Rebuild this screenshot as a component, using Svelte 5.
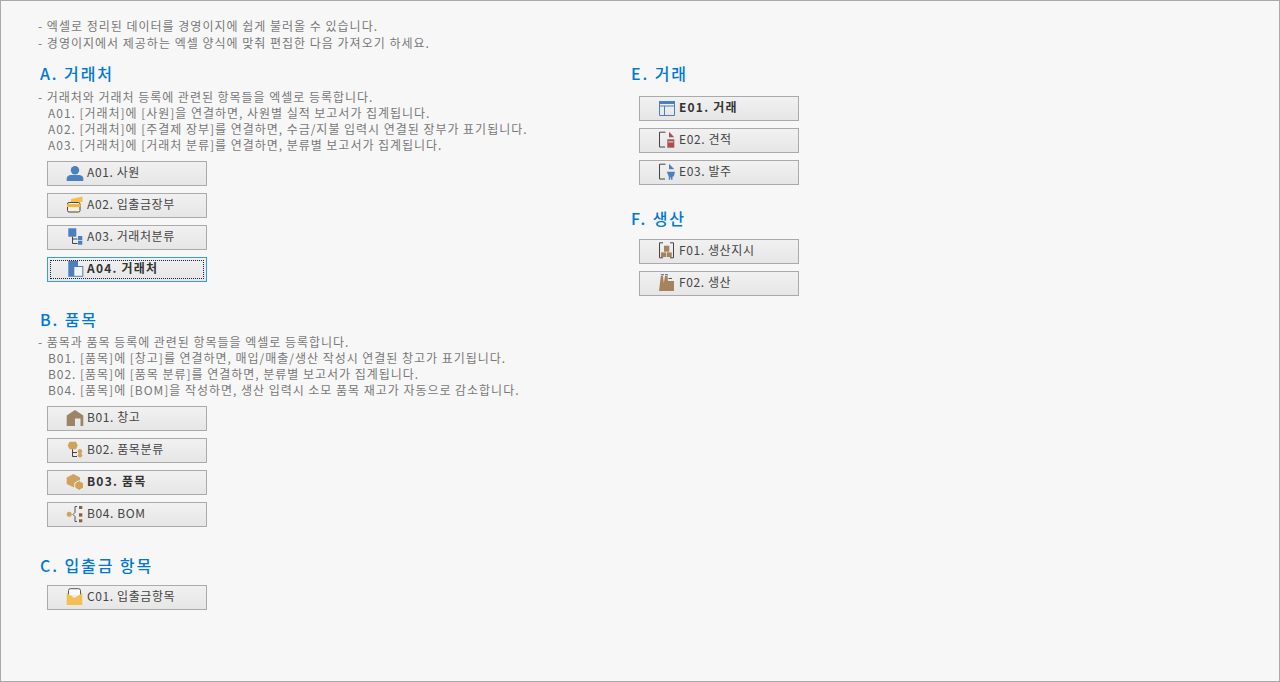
<script>
  const sections = {
    left: [
      {
        title: 'A. 거래처', cls: 'sa',
        lead: '- 거래처와 거래처 등록에 관련된 항목들을 엑셀로 등록합니다.',
        notes: ['A01. [거래처]에 [사원]을 연결하면, 사원별 실적 보고서가 집계됩니다.', 'A02. [거래처]에 [주결제 장부]를 연결하면, 수금/지불 입력시 연결된 장부가 표기됩니다.', 'A03. [거래처]에 [거래처 분류]를 연결하면, 분류별 보고서가 집계됩니다.'],
        buttons: [
          { icon: 'a01', label: 'A01. 사원' }, { icon: 'a02', label: 'A02. 입출금장부' },
          { icon: 'a03', label: 'A03. 거래처분류' }, { icon: 'a04', label: 'A04. 거래처', bold: true, focus: true }
        ]
      },
      {
        title: 'B. 품목', cls: 'sb',
        lead: '- 품목과 품목 등록에 관련된 항목들을 엑셀로 등록합니다.',
        notes: ['B01. [품목]에 [창고]를 연결하면, 매입/매출/생산 작성시 연결된 창고가 표기됩니다.', 'B02. [품목]에 [품목 분류]를 연결하면, 분류별 보고서가 집계됩니다.', 'B04. [품목]에 [BOM]을 작성하면, 생산 입력시 소모 품목 재고가 자동으로 감소합니다.'],
        buttons: [
          { icon: 'b01', label: 'B01. 창고' }, { icon: 'b02', label: 'B02. 품목분류' },
          { icon: 'b03', label: 'B03. 품목', bold: true }, { icon: 'b04', label: 'B04. BOM' }
        ]
      },
      { title: 'C. 입출금 항목', cls: 'sc', buttons: [{ icon: 'c01', label: 'C01. 입출금항목' }] }
    ],
    right: [
      {
        title: 'E. 거래', cls: 'se',
        buttons: [{ icon: 'e01', label: 'E01. 거래', bold: true }, { icon: 'e02', label: 'E02. 견적' }, { icon: 'e03', label: 'E03. 발주' }]
      },
      { title: 'F. 생산', cls: 'sf', buttons: [{ icon: 'f01', label: 'F01. 생산지시' }, { icon: 'f02', label: 'F02. 생산' }] }
    ]
  };
</script>

{#snippet icon(name)}
  <svg class="ico" viewBox="0 0 18 16" aria-hidden="true">
    {#if name === 'a01'}
      <circle cx="9" cy="4.2" r="4.2" fill="#4a80bd" />
      <path d="M.7 15V12.5Q.7 9.5 4.5 9H13.5Q17.3 9.5 17.3 12.5V15Z" fill="#4a80bd" />
    {:else if name === 'a02'}
      <path d="M5 4V1L16.5-1.5V4Z" fill="#f3c04f" />
      <rect x="1.5" y="4.5" width="12.5" height="9.5" rx="1.5" fill="#f7f0e0" stroke="#444" />
      <rect x="1" y="6" width="13.5" height="3" fill="#efb83a" />
    {:else if name === 'a03'}
      <rect x="2.3" y="-1.7" width="8" height="8.4" fill="#4a80bd" />
      <rect x="12" y="6" width="4.3" height="4" fill="#4a80bd" />
      <rect x="12" y="10.7" width="4.3" height="4" fill="#4a80bd" />
      <path d="M6.5 6.7V13.5H11.5M6.5 9H11.5" fill="none" stroke="#444" />
    {:else if name === 'a04'}
      <path d="M2.3-1.3H12V4H17.3V14.7H2.3Z" fill="#4a80bd" />
      <rect x="8.3" y="5" width="8" height="8.8" fill="#f4f4f4" />
    {:else if name === 'b01'}
      <path d="M.7 4.5L9-1L17.3 4.5V15H14.5V7.5H9V15H.7Z" fill="#9c8567" />
    {:else if name === 'b02'}
      <path d="M3.5-1.3H10L11.7 2.5L10 6.3H3.5L1.7 2.5Z" fill="#cfa25e" />
      <circle cx="14" cy="8.3" r="2.2" fill="#cfa25e" />
      <circle cx="14" cy="12.3" r="2.2" fill="#cfa25e" />
      <path d="M6.5 6.3V13.5H11M6.5 9.5H11" fill="none" stroke="#444" />
    {:else if name === 'b03'}
      <path d="M7.5-1L14 2.5V9L7.5 12.3L.7 9V2.5Z" fill="#cfa25e" />
      <path d="M13.2 5.6L17.6 8V13L13.2 15.4L8.8 13V8Z" fill="#cfa25e" stroke="#f0f0f0" />
    {:else if name === 'b04'}
      <circle cx="3.2" cy="7.2" r="2.5" fill="#cfa25e" />
      <path d="M11 -.5H9V5.5L7 7.5L9 9.5V14.5H11" fill="none" stroke="#555" />
      <rect x="13" y="-1" width="3.3" height="3" fill="#8b5e3c" />
      <rect x="13" y="6.3" width="3.3" height="3.3" fill="#8b5e3c" />
      <rect x="13" y="12.3" width="3.3" height="3" fill="#8b5e3c" />
    {:else if name === 'c01'}
      <path d="M2.5 5V.5Q2.5-1.3 4.5-1.3H12.5Q14.5-1.3 14.5.5V5" fill="#fafafa" stroke="#555" />
      <path d="M.7 3L8.5 8L16.3 3V15H.7Z" fill="#f2bf52" />
    {:else if name === 'e01'}
      <rect x="1" y="0" width="16" height="3" fill="#4a80bd" />
      <path d="M1.5 3V14.5H16.5V3M1.5 5H16.5M6.5 5V14.5" fill="none" stroke="#4a80bd" />
    {:else if name === 'e02'}
      <path d="M7.5-.8H1.5V14H7" fill="none" stroke="#444" />
      <path d="M11-1.3L16.3 4.3H11Z" fill="#a85050" />
      <rect x="9.3" y="6.3" width="7" height="8.4" fill="#a85050" />
      <rect x="10.3" y="8.4" width="5" height="1" fill="#f2e6e6" />
    {:else if name === 'e03'}
      <path d="M7.5-.8H1.5V14H7" fill="none" stroke="#444" />
      <path d="M11-1.3L16.3 4.3H11Z" fill="#4a80bd" />
      <path d="M8.7 6.7H17L15.8 11.5H14.5V14.7H13V12.5H12.2V14.7H10.8V11.5Z" fill="#4a80bd" />
    {:else if name === 'f01'}
      <path d="M5-1.2H1.5V13.8H5M12-1.2H15.5V13.8H12" fill="none" stroke="#444" />
      <rect x="6" y="1.7" width="5.3" height="6" fill="#a5835c" />
      <rect x="3" y="8.4" width="5" height="4.6" fill="#a5835c" />
      <rect x="8.7" y="8.4" width="5" height="4.6" fill="#a5835c" />
    {:else if name === 'f02'}
      <path d="M1 15L2.8 0H5L5.8 7L7 0H9.5L10 5H16V15Z" fill="#a5835c" />
      <path d="M2.8-1.2H6M7-1.2H10M10.5 2.5H14" fill="none" stroke="#555" />
    {/if}
  </svg>
{/snippet}

{#snippet group(s)}
  <section class={s.cls}>
    <h2>{s.title}</h2>
    {#if s.lead}
      <div class="desc">
        <p>{s.lead}</p>
        {#each s.notes as n}<p class="note">{n}</p>{/each}
      </div>
    {/if}
    <div class="btns">
      {#each s.buttons as b}
        <button type="button" class:bold={b.bold} class:focus={b.focus}>
          {@render icon(b.icon)}
          <span>{b.label}</span>
        </button>
      {/each}
    </div>
  </section>
{/snippet}

<div class="page">
  <div class="intro">
    <p>- 엑셀로 정리된 데이터를 경영이지에 쉽게 불러올 수 있습니다.</p>
    <p>- 경영이지에서 제공하는 엑셀 양식에 맞춰 편집한 다음 가져오기 하세요.</p>
  </div>
  <div class="cols">
    <div class="col">
      {#each sections.left as s}{@render group(s)}{/each}
    </div>
    <div class="col">
      {#each sections.right as s}{@render group(s)}{/each}
    </div>
  </div>
</div>

<style>
  :global(body) { margin: 0; background: #f7f7f7; }
  .page {
    box-sizing: border-box;
    width: 1280px;
    height: 682px;
    border: 1px solid #aaa;
    padding: 16px 0 0 37px;
    background: #f7f7f7;
    font-family: "Noto Sans CJK KR", "Noto Sans", sans-serif;
    overflow: hidden;
  }
  p { margin: 0; }
  .intro { font-size: 12px; line-height: 17px; color: #777; letter-spacing: 1px; }
  .cols { display: grid; grid-template-columns: 592px 1fr; margin-top: 12px; }
  .col { display: flex; flex-direction: column; }
  h2 {
    margin: 0 0 0 2px;
    font-size: 16px;
    line-height: 20px;
    font-weight: 500;
    color: #0078d7;
    letter-spacing: 1.9px;
  }
  .se h2, .sf h2 { margin-left: 1px; }
  .desc { margin-top: 5px; font-size: 12px; line-height: 16px; color: #777; letter-spacing: 0.97px; }
  .sa .desc { margin-top: 6px; }
  .note { padding-left: 10px; }
  .btns { display: flex; flex-direction: column; gap: 7px; margin: 8px 0 0 9px; }
  .sb { margin-top: 27px; }
  .sc { margin-top: 28px; }
  .sc .btns { margin-top: 10px; }
  .se .btns { margin-top: 13px; }
  .sf { margin-top: 23px; }
  .sf .btns { margin-top: 11px; }
  button {
    box-sizing: border-box;
    position: relative;
    display: flex;
    align-items: center;
    width: 160px;
    height: 25px;
    padding: 0 0 4px 18px;
    border: 1px solid #aaa;
    background: linear-gradient(#f1f1f1, #e6e6e6);
    font: inherit;
    font-size: 12px;
    letter-spacing: 0.6px;
    color: #444;
    text-align: left;
  }
  .ico { flex: none; width: 18px; height: 16px; margin-right: 3px; align-self: flex-start; margin-top: 4px; overflow: visible; }
  .bold { font-weight: 700; color: #333; letter-spacing: 1.2px; }
  .focus { border-color: #3399ff; }
  .focus::after {
    content: "";
    position: absolute;
    inset: 2px;
    border: 1px dotted #222;
  }
</style>
